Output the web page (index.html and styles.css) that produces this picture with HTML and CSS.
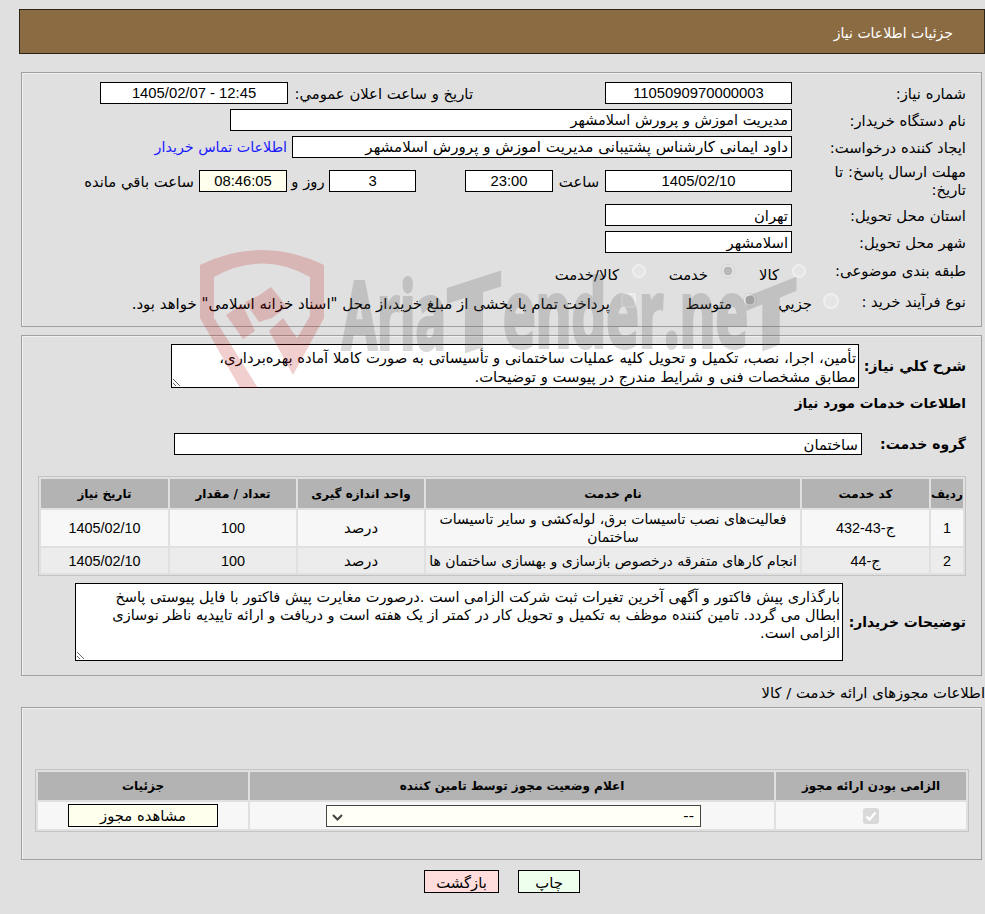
FILE: index.html
```html
<!DOCTYPE html>
<html lang="fa" dir="rtl">
<head>
<meta charset="utf-8">
<title>جزئیات اطلاعات نیاز</title>
<link rel="stylesheet" href="styles.css">
</head>
<body>
<header class="page-title">جزئیات اطلاعات نیاز</header>

<section class="panel panel-main">
  <div class="row row-1">
    <span class="label">شماره نياز:</span>
    <span class="field w187 center num">1105090970000003</span>
    <span class="label-inline l-announce">تاريخ و ساعت اعلان عمومي:</span>
    <span class="field w188 center num">12:45 - 1405/02/07</span>
  </div>
  <div class="row">
    <span class="label">نام دستگاه خريدار:</span>
    <span class="field w562 f-buyer">مدیریت اموزش و پرورش اسلامشهر</span>
  </div>
  <div class="row">
    <span class="label">ایجاد کننده درخواست:</span>
    <span class="field w500 f-creator">داود ایمانی کارشناس پشتیبانی مدیریت اموزش و پرورش اسلامشهر</span>
    <a class="contact" href="#">اطلاعات تماس خريدار</a>
  </div>
  <div class="row row-deadline">
    <span class="label label-two">مهلت ارسال پاسخ: تا تاریخ:</span>
    <span class="field w187 center num">1405/02/10</span>
    <span class="label-inline l-hour">ساعت</span>
    <span class="field w88 center num">23:00</span>
    <span class="field w87 center num f-days">3</span>
    <span class="label-inline l-days">روز و</span>
    <span class="field w88 center num f-remain">08:46:05</span>
    <span class="label-inline l-remain">ساعت باقي مانده</span>
  </div>
  <div class="row">
    <span class="label">استان محل تحويل:</span>
    <span class="field w187">تهران</span>
  </div>
  <div class="row">
    <span class="label">شهر محل تحويل:</span>
    <span class="field w187">اسلامشهر</span>
  </div>
  <div class="row row-category">
    <span class="label">طبقه بندی موضوعی:</span>
    <label class="opt opt-kala"><input class="pick" type="radio" name="cat" disabled>کالا</label>
    <label class="opt opt-khedmat"><input class="pick" type="radio" name="cat" disabled checked>خدمت</label>
    <label class="opt"><input class="pick" type="radio" name="cat" disabled>کالا/خدمت</label>
  </div>
  <div class="row row-process">
    <span class="label">نوع فرآيند خريد :</span>
    <label class="opt opt-jozi"><input class="pick" type="radio" name="proc" disabled>جزيي</label>
    <label class="opt opt-motavaset"><input class="pick" type="radio" name="proc" disabled checked>متوسط</label>
    <label class="opt opt-payment"><input class="pick pick-box" type="checkbox" disabled>پرداخت تمام يا بخشی از مبلغ خرید،از محل "اسناد خزانه اسلامی" خواهد بود.</label>
  </div>
</section>

<section class="panel panel-items">
  <div class="desc-row desc-need">
    <span class="label-bold">شرح کلي نياز:</span>
    <textarea class="note note-need" readonly>تأمین، اجرا، نصب، تکمیل و تحویل کلیه عملیات ساختمانی و تأسیساتی به صورت کاملا آماده بهره‌برداری، مطابق مشخصات فنی و شرایط مندرج در پیوست و توضیحات.</textarea>
  </div>
  <h2 class="section-title">اطلاعات خدمات مورد نياز</h2>
  <div class="group-row">
    <span class="label-bold">گروه خدمت:</span>
    <span class="field w688">ساختمان</span>
  </div>
  <table class="grid grid-items">
    <thead>
      <tr><th class="c-idx">رديف</th><th class="c-code">کد خدمت</th><th class="c-name">نام خدمت</th><th class="c-unit">واحد اندازه گيری</th><th class="c-qty">تعداد / مقدار</th><th>تاريخ نياز</th></tr>
    </thead>
    <tbody>
      <tr class="r-tall"><td class="num">1</td><td class="num">ج-43-432</td><td class="cell-name">فعالیت‌های نصب تاسیسات برق، لوله‌کشی و سایر تاسیسات ساختمان</td><td>درصد</td><td class="num">100</td><td class="num">1405/02/10</td></tr>
      <tr class="r-alt"><td class="num">2</td><td class="num">ج-44</td><td class="cell-name">انجام کارهای متفرقه درخصوص بازسازی و بهسازی ساختمان ها</td><td>درصد</td><td class="num">100</td><td class="num">1405/02/10</td></tr>
    </tbody>
  </table>
  <div class="desc-row desc-buyer">
    <span class="label-bold">توضیحات خريدار:</span>
    <textarea class="note note-buyer" readonly>بارگذاری پیش فاکتور و آگهی آخرین تغیرات ثبت شرکت الزامی است .درصورت مغایرت پیش فاکتور با فایل پیوستی پاسخ ابطال می گردد. تامین کننده موظف به تکمیل و تحویل کار در کمتر از یک هفته است و دریافت و ارائه تاییدیه ناظر نوسازی الزامی است.</textarea>
  </div>
</section>

<p class="license-caption">اطلاعات مجوزهای ارائه خدمت / کالا</p>
<section class="panel panel-license">
  <table class="grid grid-license">
    <thead>
      <tr><th class="c-req">الزامی بودن ارائه مجوز</th><th class="c-status">اعلام وضعیت مجوز توسط تامین کننده</th><th>جزئیات</th></tr>
    </thead>
    <tbody>
      <tr>
        <td><input class="req-check" type="checkbox" checked disabled></td>
        <td><select class="status-select"><option>--</option></select></td>
        <td><button class="view-btn" type="button">مشاهده مجوز</button></td>
      </tr>
    </tbody>
  </table>
</section>

<div class="actions">
  <button class="btn btn-print" type="button">چاپ</button>
  <button class="btn btn-back" type="button">بازگشت</button>
</div>

<svg class="watermark" viewBox="0 0 985 400" width="985" height="400" aria-hidden="true">
  <g class="wm-shield">
    <path d="M200 265Q262 235 324 265V318L293 375L269 331L283 318L297 338L310 316V277Q262 250 214 277V318L258 388H240L200 318Z"/>
    <path d="M226 315L242 304L255 331L243 339Z"/>
    <path d="M245 302L258 296L271 287L287 307L272 318L259 322Z"/>
  </g>
  <g class="wm-text">
    <text x="342" y="349" textLength="104" lengthAdjust="spacingAndGlyphs">Aria</text>
    <text transform="matrix(1 -0.32 0 1 447 357)" x="0" y="0" textLength="54" lengthAdjust="spacingAndGlyphs">T</text>
    <text x="503" y="347" textLength="245" lengthAdjust="spacingAndGlyphs">ender.ne</text>
    <text class="wm-t2" transform="matrix(1 -0.4 0 1 746 356)" x="0" y="0" textLength="50" lengthAdjust="spacingAndGlyphs">T</text>
  </g>
</svg>
</body>
</html>
```
FILE: styles.css
```css
* { box-sizing: border-box; }
html, body { margin: 0; padding: 0; }
body {
  position: relative;
  width: 985px;
  height: 914px;
  overflow: hidden;
  background: #e0e0e0;
  color: #000;
  font: 14.8px/18px "DejaVu Sans", sans-serif;
}
.page-title {
  height: 45px;
  margin: 9px 0 0 19px;
  padding: 14px 31px 0 0;
  background: #8b6b41;
  border: 1px solid #2c2416;
  color: #fff;
  font-size: 14px;
}
.panel {
  margin-left: 21px;
  margin-right: 3px;
  border: 1px solid #a0a0a0;
  box-shadow: inset 1px 1px 0 #f0f0f0;
}
.panel-main { height: 255px; margin-top: 18px; padding: 9px 15px 0 0; }
.panel-items { position: relative; height: 341px; margin-top: 8px; padding: 8px 15px 0 0; }
.panel-license { height: 153px; padding: 61px 12px 0 0; }

.row { display: flex; align-items: center; height: 22px; margin-bottom: 5px; }
.label { width: 174px; flex: none; padding-top: 2px; white-space: nowrap; }
.field {
  display: block;
  flex: none;
  height: 22px;
  padding: 0 3px 0 0;
  background: #fff;
  border: 1px solid #000;
  line-height: 21px;
  white-space: nowrap;
  overflow: hidden;
}
.center { padding: 0; text-align: center; }
.num { font-family: "Liberation Sans", "DejaVu Sans", sans-serif; font-size: 14.8px; }
.w187 { width: 187px; }
.w188 { width: 188px; }
.w562 { width: 562px; }
.w500 { width: 500px; }
.w88 { width: 88px; }
.w87 { width: 87px; }
.w688 { width: 688px; }
.f-buyer { font-size: 14.4px; }
.f-creator { font-size: 15.1px; }
.label-inline { flex: none; white-space: nowrap; padding-top: 1px; }
.l-announce { width: 317px; padding-right: 132px; }
.contact { margin-right: 5px; color: #1a1aff; font-size: 14.3px; text-decoration: none; white-space: nowrap; }
.row-deadline { margin-top: 12px; margin-bottom: 12px; }
.label-two { padding: 0 0 0 15px; line-height: 18px; white-space: normal; }
.l-hour { width: 52px; text-align: center; }
.f-days { margin-right: 49px; }
.l-days { width: 42px; text-align: center; }
.f-remain { background: #ffffee; }
.l-remain { margin-right: 5px; }

.row-category { margin-top: 6px; margin-bottom: 9px; }
.row-process { margin-bottom: 0; }
.opt {
  display: flex;
  flex: none;
  align-items: flex-start;
  height: 22px;
  padding-top: 7px;
  white-space: nowrap;
}
.row-process .opt { padding-top: 5px; }
.opt-payment { font-size: 15px; }
.pick {
  appearance: none;
  flex: none;
  width: 14px;
  height: 14px;
  margin: -2px 0 0 13px;
  background: #e5e5e5;
  border: 2px solid #efefef;
  border-radius: 50%;
}
.pick:checked {
  background: radial-gradient(circle closest-side, #b8b8b8 0 70%, #ececec 80%);
  border: 1px solid #d0d0d0;
}
.pick-box { width: 15px; height: 15px; margin-left: 11px; border-radius: 3px; }
.opt-kala { width: 71px; margin-right: -14px; }
.opt-khedmat { width: 89px; }
.row-process .pick { margin-left: 11px; }
.opt-jozi { width: 82px; margin-right: -47px; }
.opt-jozi .pick { width: 16px; height: 16px; }
.opt-motavaset { width: 121px; }

.desc-row { display: flex; align-items: center; }
.label-bold { flex: none; font-weight: bold; font-size: 14.3px; white-space: nowrap; }
.desc-need { height: 44px; }
.desc-need .label-bold { width: 107px; }
.note {
  display: block;
  flex: none;
  margin: 0;
  padding: 4px 2px 0;
  background: #fff;
  border: 1px solid #000;
  color: #000;
  font: 14.8px/18px "DejaVu Sans", sans-serif;
  outline: none;
}
.note-need { width: 688px; height: 44px; line-height: 19px; padding-top: 3px; }
.section-title { margin: 6px 0 0; font-size: 13.7px; line-height: 18px; }
.group-row { display: flex; align-items: center; height: 22px; margin-top: 21px; }
.group-row .label-bold { width: 104px; font-size: 14px; }
.grid {
  border-collapse: separate;
  border-spacing: 2px;
  border: 1px solid #c4c4c4;
  table-layout: fixed;
  text-align: center;
}
.grid th { background: #b3b3b3; font-size: 12px; font-weight: bold; padding: 0; }
.grid td { background: #f7f7f7; padding: 0; }
.grid td.num { font-size: 14.4px; }
.grid-items { width: 928px; margin: 21px 0 0 0; }
.grid-items thead tr { height: 29px; }
.c-idx { width: 32px; }
.c-code { width: 127px; }
.c-name { width: 374px; }
.c-unit { width: 126px; }
.c-qty { width: 126px; }
.r-tall { height: 36px; }
.r-alt { height: 25px; }
.r-alt td { background: #ececec; }
.cell-name { padding: 0 2px !important; font-size: 14px; line-height: 18px; }
.r-alt .cell-name { padding: 0 !important; white-space: nowrap; }
.desc-buyer { margin-top: 7px; height: 78px; }
.desc-buyer .label-bold { width: 123px; font-size: 13.9px; }
.note-buyer { width: 768px; height: 78px; padding-left: 25px; font-size: 14.5px; }

.license-caption { height: 18px; margin: 8px 0 5px; }
.grid-license { width: 934px; }
.grid-license thead tr { height: 28px; }
.c-req { width: 190px; }
.c-status { width: 524px; }
.grid-license tbody tr { height: 27px; }
.req-check {
  appearance: none;
  display: block;
  width: 16px;
  height: 16px;
  margin: 0 auto;
  border-radius: 3px;
  background: #d9d9d9 url("data:image/svg+xml,%3Csvg xmlns='http://www.w3.org/2000/svg' viewBox='0 0 16 16'%3E%3Cpath d='M3.5 8.5l3 3 6-7' fill='none' stroke='%23fff' stroke-width='2.4'/%3E%3C/svg%3E") center no-repeat;
}
.status-select {
  appearance: none;
  display: block;
  width: 375px;
  height: 22px;
  margin: 0 73px 0 0;
  padding: 0 6px 0 0;
  background: #fffff5 url("data:image/svg+xml,%3Csvg xmlns='http://www.w3.org/2000/svg' width='11' height='7'%3E%3Cpath d='M1 1l4.500 4.500 4.500-4.500' fill='none' stroke='%23444' stroke-width='2'/%3E%3C/svg%3E") 5px 8px no-repeat;
  border: 1px solid #444;
  border-radius: 0;
  color: #000;
  font: 14.8px "DejaVu Sans", sans-serif;
}
.view-btn {
  display: block;
  width: 150px;
  height: 23px;
  margin: 0 auto;
  padding: 1px 0 0;
  background: #ffffee;
  border: 1px solid #000;
  color: #000;
  font: 14.8px/18px "DejaVu Sans", sans-serif;
}
.actions { display: flex; justify-content: center; gap: 19px; margin: 10px 0 0; padding-left: 19px; }
.btn {
  height: 23px;
  padding: 3px 0 0;
  border: 1px solid #000;
  color: #000;
  font: 14.8px/18px "DejaVu Sans", sans-serif;
}
.btn-print { width: 62px; background: #eeffee; }
.btn-back { width: 75px; background: #ffdddd; }

.watermark { position: absolute; left: 0; top: 0; direction: ltr; pointer-events: none; }
.wm-shield { fill: rgba(192, 15, 15, .2); }
.wm-text {
  fill: #555;
  stroke: #555;
  stroke-width: 4px;
  opacity: .22;
  font-family: "Open Sans", sans-serif;
  font-weight: 700;
  font-size: 94px;
}
.wm-text .wm-t2 { font-size: 80px; }
```
